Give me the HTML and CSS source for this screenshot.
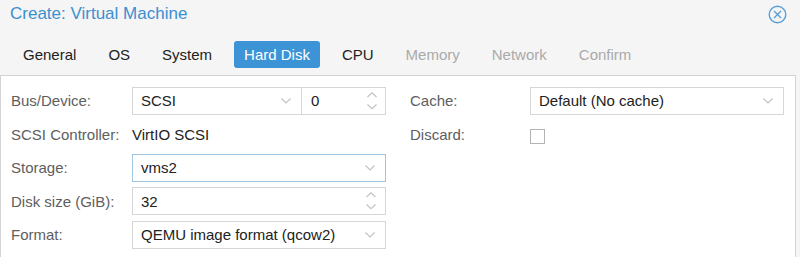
FILE: index.html
```html
<!DOCTYPE html>
<html>
<head>
<meta charset="utf-8">
<link rel="stylesheet" href="styles.css">
</head>
<body>
<div class="window">
  <div class="title-bar">
    <div class="title">Create: Virtual Machine</div>
    <svg class="close" width="19" height="19" viewBox="0 0 19 19">
      <circle cx="9.5" cy="9.5" r="8.3" fill="none" stroke="#5a9fd8" stroke-width="1.4"/>
      <path d="M6 6 L13 13 M13 6 L6 13" stroke="#5a9fd8" stroke-width="1.4" fill="none"/>
    </svg>
  </div>
  <div class="tabs">
    <div class="tab">General</div>
    <div class="tab">OS</div>
    <div class="tab">System</div>
    <div class="tab active">Hard Disk</div>
    <div class="tab">CPU</div>
    <div class="tab disabled">Memory</div>
    <div class="tab disabled">Network</div>
    <div class="tab disabled">Confirm</div>
  </div>
  <div class="panel">
    <div class="column">
      <div class="row">
        <div class="label">Bus/Device:</div>
        <div class="field-group">
          <div class="field select bus">
            <span>SCSI</span>
            <svg class="chev" width="10" height="6" viewBox="0 0 10 6"><path d="M0.5 0.5 L5 5 L9.5 0.5" fill="none" stroke="#c2c2c2" stroke-width="1.2"/></svg>
          </div>
          <div class="field spin dev">
            <span>0</span>
            <svg class="spinner" width="10" height="18" viewBox="0 0 10 18"><path d="M0.5 5 L5 0.8 L9.5 5 M0.5 12.5 L5 16.7 L9.5 12.5" fill="none" stroke="#c2c2c2" stroke-width="1.2"/></svg>
          </div>
        </div>
      </div>
      <div class="row">
        <div class="label">SCSI Controller:</div>
        <div class="value">VirtIO SCSI</div>
      </div>
      <div class="row">
        <div class="label">Storage:</div>
        <div class="field select wide focus">
          <span>vms2</span>
          <svg class="chev" width="10" height="6" viewBox="0 0 10 6"><path d="M0.5 0.5 L5 5 L9.5 0.5" fill="none" stroke="#c2c2c2" stroke-width="1.2"/></svg>
        </div>
      </div>
      <div class="row">
        <div class="label">Disk size (GiB):</div>
        <div class="field spin wide">
          <span>32</span>
          <svg class="spinner" width="10" height="18" viewBox="0 0 10 18"><path d="M0.5 5 L5 0.8 L9.5 5 M0.5 12.5 L5 16.7 L9.5 12.5" fill="none" stroke="#c2c2c2" stroke-width="1.2"/></svg>
        </div>
      </div>
      <div class="row">
        <div class="label">Format:</div>
        <div class="field select wide">
          <span>QEMU image format (qcow2)</span>
          <svg class="chev" width="10" height="6" viewBox="0 0 10 6"><path d="M0.5 0.5 L5 5 L9.5 0.5" fill="none" stroke="#c2c2c2" stroke-width="1.2"/></svg>
        </div>
      </div>
    </div>
    <div class="column right">
      <div class="row">
        <div class="label">Cache:</div>
        <div class="field select wide">
          <span>Default (No cache)</span>
          <svg class="chev" width="10" height="6" viewBox="0 0 10 6"><path d="M0.5 0.5 L5 5 L9.5 0.5" fill="none" stroke="#c2c2c2" stroke-width="1.2"/></svg>
        </div>
      </div>
      <div class="row">
        <div class="label">Discard:</div>
        <div class="checkbox"></div>
      </div>
    </div>
  </div>
</div>
</body>
</html>
```

FILE: styles.css
```css
html, body {
  margin: 0;
  padding: 0;
}
body {
  background: #f5f5f5;
  font-family: "Liberation Sans", Arial, sans-serif;
  width: 800px;
  height: 257px;
  overflow: hidden;
}
.window {
  display: flex;
  flex-direction: column;
}
.title-bar {
  height: 34px;
  display: flex;
  justify-content: space-between;
  align-items: flex-start;
}
.title {
  font-size: 17px;
  line-height: 21px;
  padding: 3px 0 0 10px;
  color: #3a8fd2;
}
.close {
  margin: 5px 13px 0 0;
}
.tabs {
  display: flex;
  gap: 12px;
  padding-left: 13px;
  margin-top: 7px;
  height: 27px;
}
.tab {
  font-size: 15px;
  line-height: 27px;
  padding: 0 10px;
  color: #222;
  border-radius: 3px;
}
.tab.active {
  background: #3c93d6;
  color: #fff;
}
.tab.disabled {
  color: #aaaaaa;
}
.panel {
  box-sizing: border-box;
  margin-top: 7px;
  width: 796px;
  height: 182px;
  background: #fff;
  border: 1px solid #d4d4d4;
  border-bottom: none;
  display: flex;
  gap: 24px;
  padding: 11px 0 0 10px;
}
.column {
  width: 375px;
  display: flex;
  flex-direction: column;
}
.column.right {
  width: 374px;
}
.row {
  display: flex;
  align-items: center;
  height: 27px;
  margin-bottom: 6.5px;
}
.label {
  width: 121px;
  flex: none;
  font-size: 15px;
  color: #5e5e5e;
}
.right .label {
  width: 120px;
}
.value {
  font-size: 15px;
  color: #222;
}
.field-group {
  display: flex;
  width: 254px;
}
.field {
  box-sizing: border-box;
  height: 28px;
  border: 1px solid #d6d6d6;
  background: #fff;
  display: flex;
  align-items: center;
  justify-content: space-between;
  padding: 0 9px 0 8px;
  font-size: 15px;
  color: #222;
}
.field.select {
  padding-right: 10px;
}
.field.bus {
  width: 170px;
}
.field.dev {
  width: 85px;
  margin-left: -1px;
  padding-left: 9px;
  padding-right: 8px;
}
.field.wide {
  width: 254px;
}
.field.focus {
  border-color: #9cc6e6;
}
.spinner {
  display: block;
}
.chev {
  display: block;
}
.checkbox {
  box-sizing: border-box;
  width: 15px;
  height: 15px;
  border: 1.5px solid #b3b3b3;
  margin-top: 4px;
}
```
